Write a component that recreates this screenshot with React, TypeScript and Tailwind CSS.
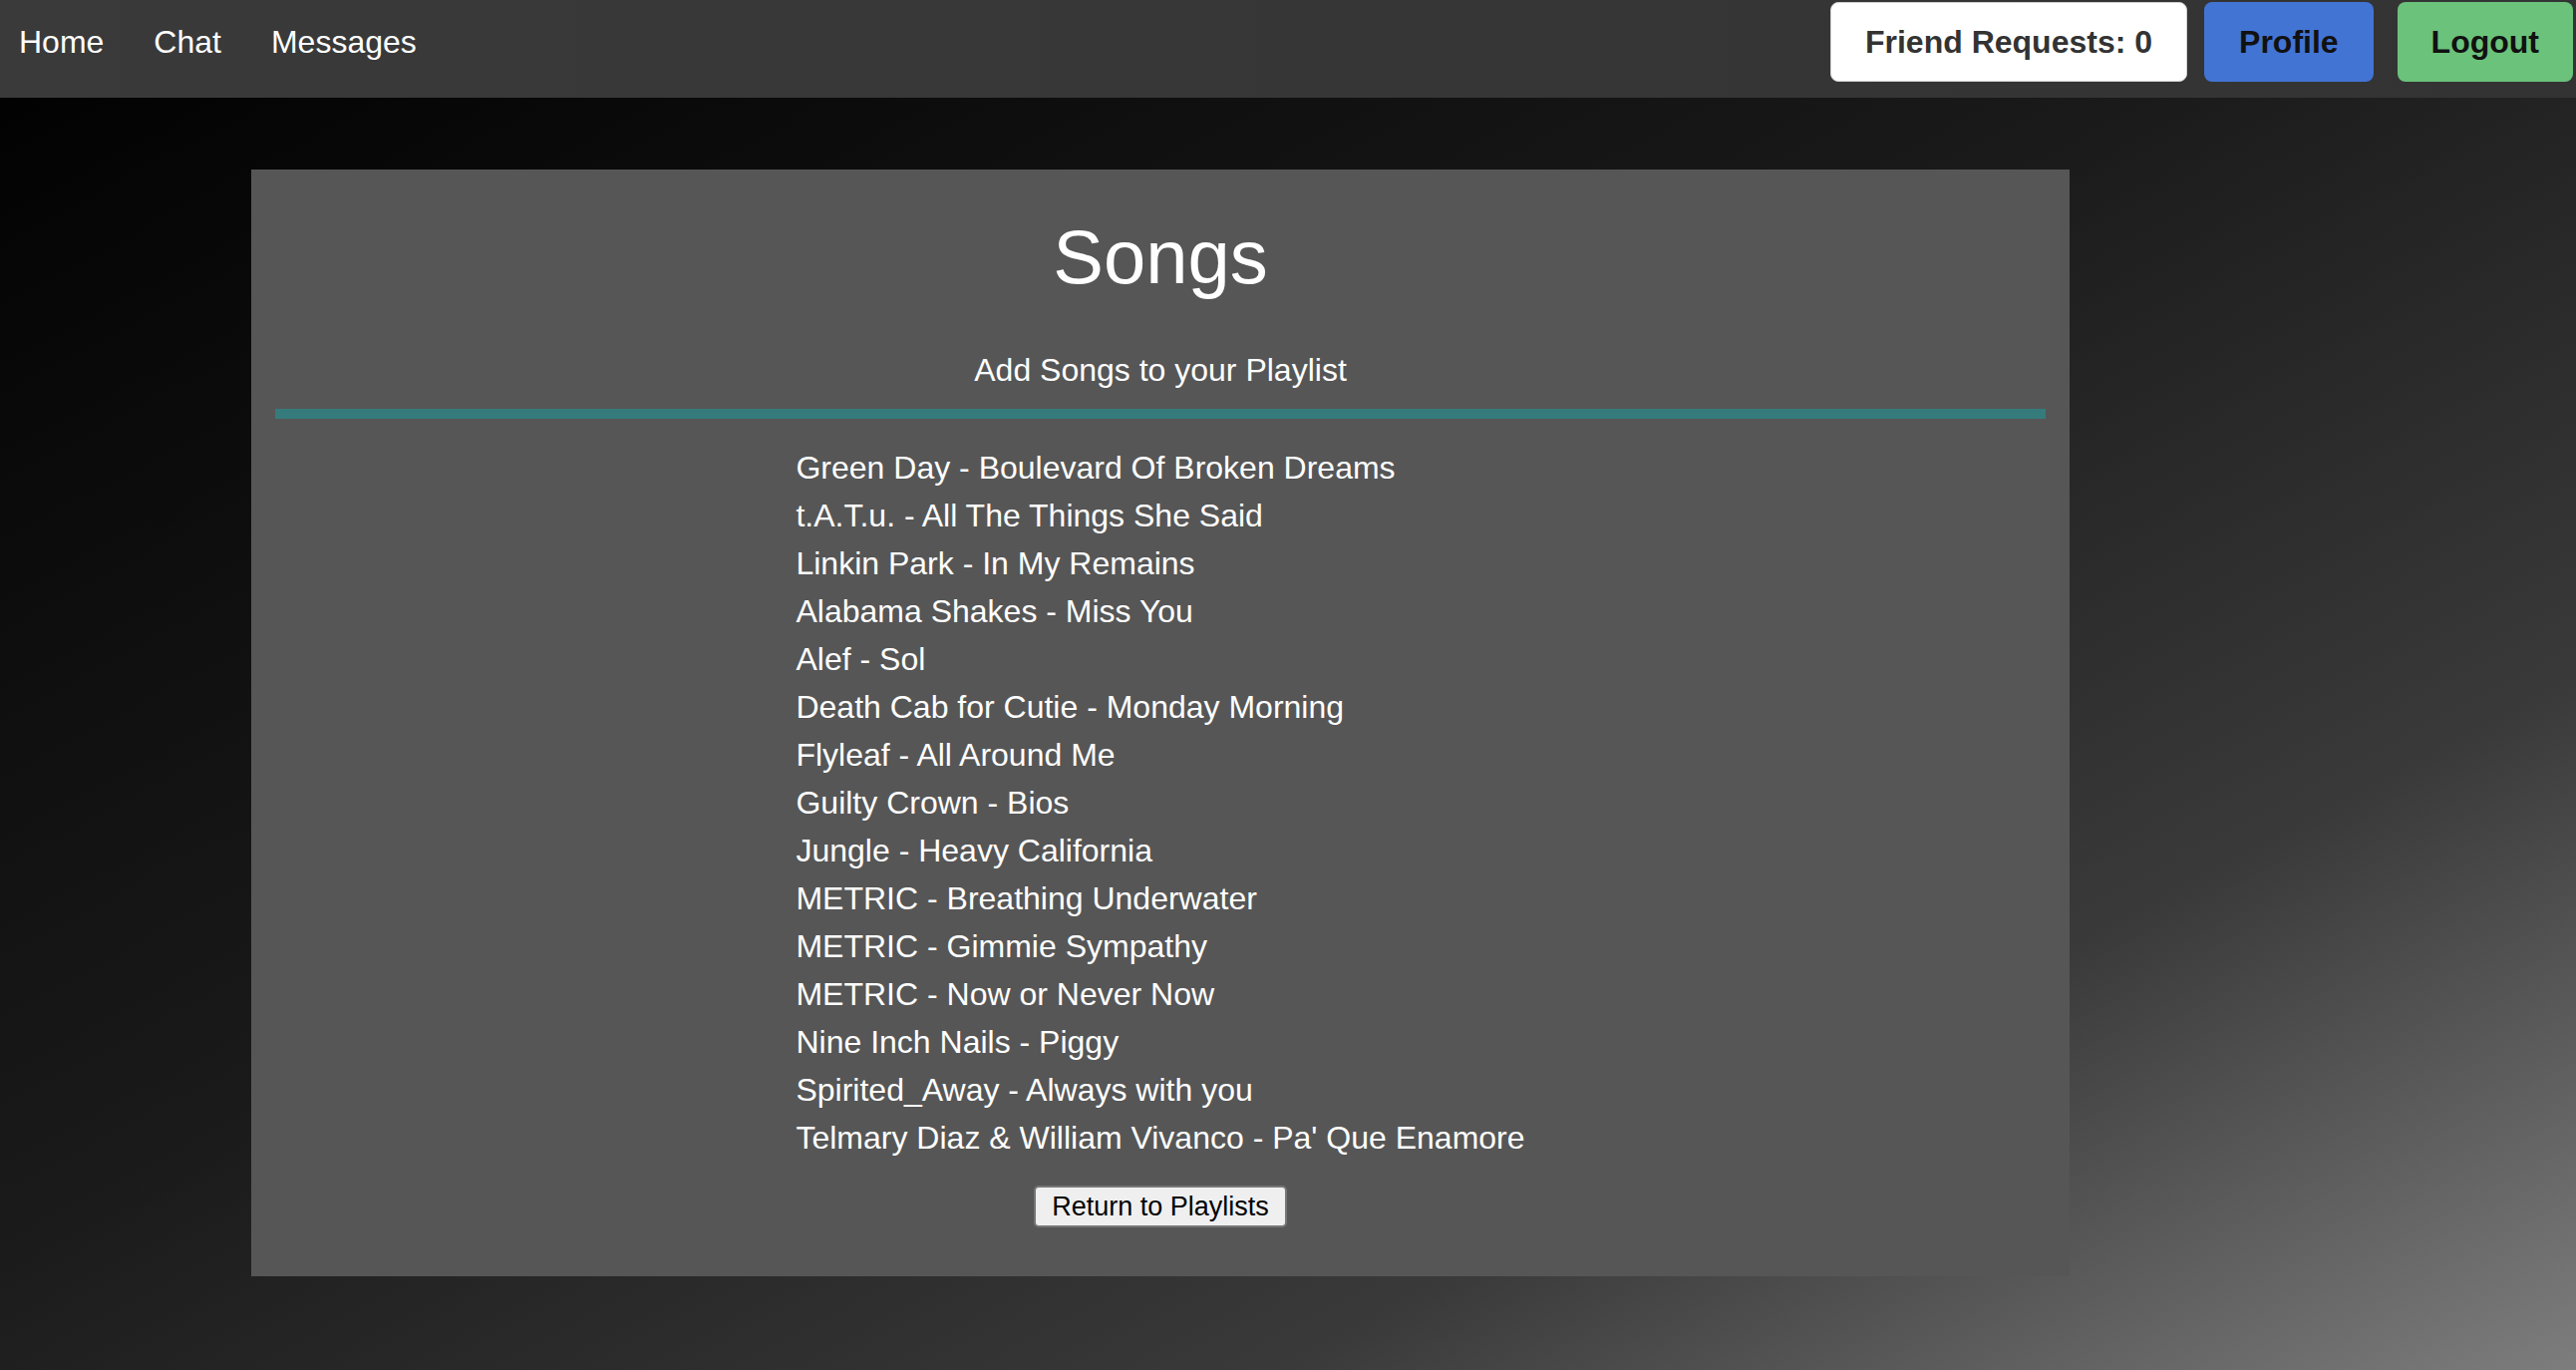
const songs = [
  'Green Day - Boulevard Of Broken Dreams',
  't.A.T.u. - All The Things She Said',
  'Linkin Park - In My Remains',
  'Alabama Shakes - Miss You',
  'Alef - Sol',
  'Death Cab for Cutie - Monday Morning',
  'Flyleaf - All Around Me',
  'Guilty Crown - Bios',
  'Jungle - Heavy California',
  'METRIC - Breathing Underwater',
  'METRIC - Gimmie Sympathy',
  'METRIC - Now or Never Now',
  'Nine Inch Nails - Piggy',
  'Spirited_Away - Always with you',
  "Telmary Diaz & William Vivanco - Pa' Que Enamore",
];

function Navbar() {
  return (
    <nav className="h-[98px] flex items-start bg-gradient-to-r from-[#3a3a3a] to-[#333333] pt-[2px]">
      {/* left links */}
      <div className="h-[80px] flex items-center gap-[50px] pl-[19px] text-[32px] leading-[40px] text-white">
        <a href="#">Home</a>
        <a href="#">Chat</a>
        <a href="#">Messages</a>
      </div>

      {/* right buttons */}
      <div className="ml-auto flex items-start mr-[3px]">
        <button className="h-[80px] px-[34px] rounded-[8px] bg-white border border-[#d0d0d0] text-[#333] text-[32px] font-bold leading-[40px]">
          Friend Requests: 0
        </button>
        <button className="ml-[17px] h-[80px] px-[35px] rounded-[8px] bg-[#4274d4] text-[#111] text-[32px] font-bold leading-[40px]">
          Profile
        </button>
        <button className="ml-[24px] h-[80px] px-[34px] rounded-[8px] bg-[#6bc27b] text-[#111] text-[32px] font-bold leading-[40px]">
          Logout
        </button>
      </div>
    </nav>
  );
}

export default function App() {
  return (
    <div
      className="min-h-screen bg-[linear-gradient(to_bottom_right,#000000_0%,#1a1a1a_45%,#3a3a3a_75%,#7d7d7d_100%)] text-white"
      style={{ fontFamily: '"Liberation Sans", Arial, sans-serif' }}
    >
      <Navbar />

      <main className="pt-[72px] pb-[94px]">
        <div className="ml-[252px] w-[1824px] h-[1110px] bg-[#565656] pt-[42px] flex flex-col items-center">
          <h1 className="text-[76px] leading-[92px] font-normal">Songs</h1>
          <p className="mt-[47px] text-[32px] leading-[40px]">Add Songs to your Playlist</p>
          <div className="mt-[19px] h-[10px] w-[1776px] bg-[#367b7b]" />

          <ul className="mt-[25px] text-left">
            {songs.map((s) => (
              <li key={s} className="text-[32px] leading-[48px] text-white">
                {s}
              </li>
            ))}
          </ul>

          <button className="mt-[24px] h-[42px] px-[16px] rounded-[5px] border-2 border-[#767676] bg-[#efefef] text-black text-[27px] leading-[36px]">
            Return to Playlists
          </button>
        </div>
      </main>
    </div>
  );
}
